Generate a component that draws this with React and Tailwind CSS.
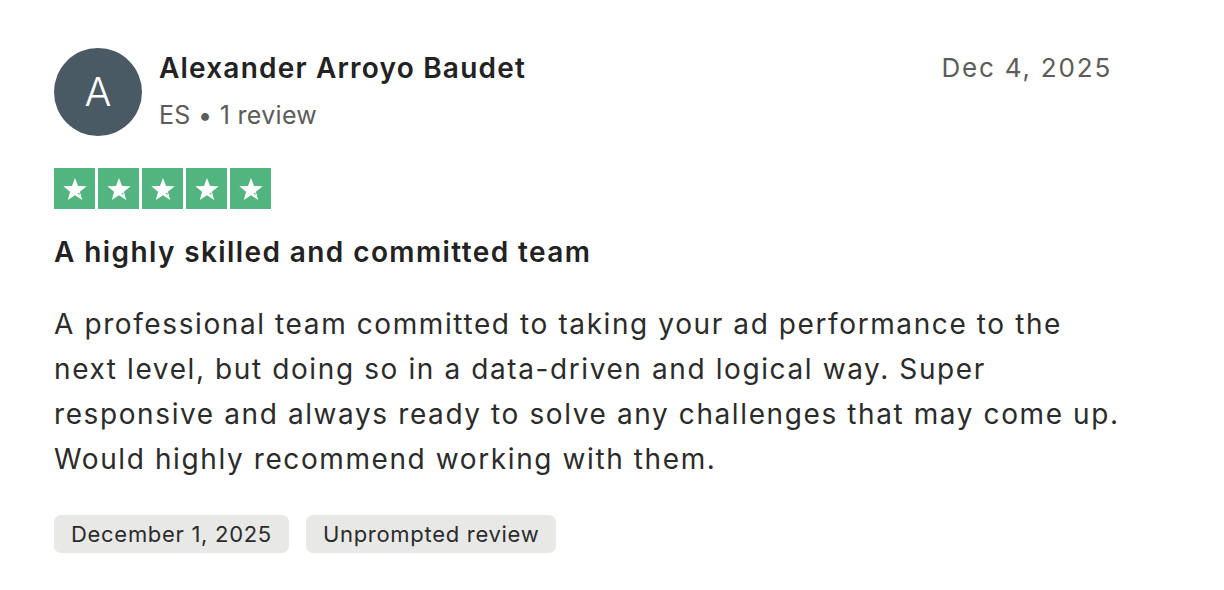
const lines = [
  'A professional team committed to taking your ad performance to the',
  'next level, but doing so in a data-driven and logical way. Super',
  'responsive and always ready to solve any challenges that may come up.',
  'Would highly recommend working with them.',
];

function Star() {
  return (
    <div className="w-[41px] h-[41px] bg-[#52b57f] flex items-center justify-center">
      <svg width="28" height="28" viewBox="0 0 24 24">
        <path d="M12 2.5l2.6 6.9 7.4.3-5.8 4.6 2 7.2L12 17.4l-6.2 4.1 2-7.2L2 9.7l7.4-.3z" fill="#fff" />
        <path d="M14.2 15.8l1.9 1.3-.6-2.2z" fill="#52b57f" />
      </svg>
    </div>
  );
}

export default function App() {
  return (
    <div className="w-[1224px] h-[590px] bg-white pl-[54px] pt-[48px] pr-[112px] text-[#2b2b2b]" style={{ fontFamily: 'Inter, "Noto Sans", sans-serif' }}>
      <div className="flex items-start">
        <div className="w-[88px] h-[88px] rounded-full bg-[#495a64] flex items-center justify-center text-white text-[40px] font-light shrink-0">
          A
        </div>
        <div className="ml-[17px] mt-[2px] flex-1">
          <div className="text-[28px] font-semibold leading-[36px] tracking-[1.2px] text-[#222]">Alexander Arroyo Baudet</div>
          <div className="text-[25px] leading-[36px] mt-[11px] tracking-[0.3px] text-[#5c5c58]">ES • 1 review</div>
        </div>
        <div className="text-[26px] leading-[36px] mt-[2px] text-[#5c5c58] tracking-[1.8px]">Dec 4, 2025</div>
      </div>

      <div className="flex gap-[3px] mt-[32px]">
        <Star />
        <Star />
        <Star />
        <Star />
        <Star />
      </div>

      <div className="mt-[23px] text-[28px] font-semibold leading-[40px] tracking-[1.4px] text-[#222]">
        A highly skilled and committed team
      </div>

      <div className="mt-[30px] text-[28px] leading-[45px] tracking-[1.6px] text-[#2b2b2b]">
        {lines.map((l) => (
          <div key={l} className="whitespace-nowrap">{l}</div>
        ))}
      </div>

      <div className="flex gap-[17px] mt-[33px]">
        <span className="h-[38px] px-[17px] flex items-center rounded-[7px] bg-[#e8e8e7] text-[22px] tracking-[0.7px] text-[#2b2b2b]">December 1, 2025</span>
        <span className="h-[38px] px-[17px] flex items-center rounded-[7px] bg-[#e8e8e7] text-[22px] tracking-[0.7px] text-[#2b2b2b]">Unprompted review</span>
      </div>
    </div>
  );
}
